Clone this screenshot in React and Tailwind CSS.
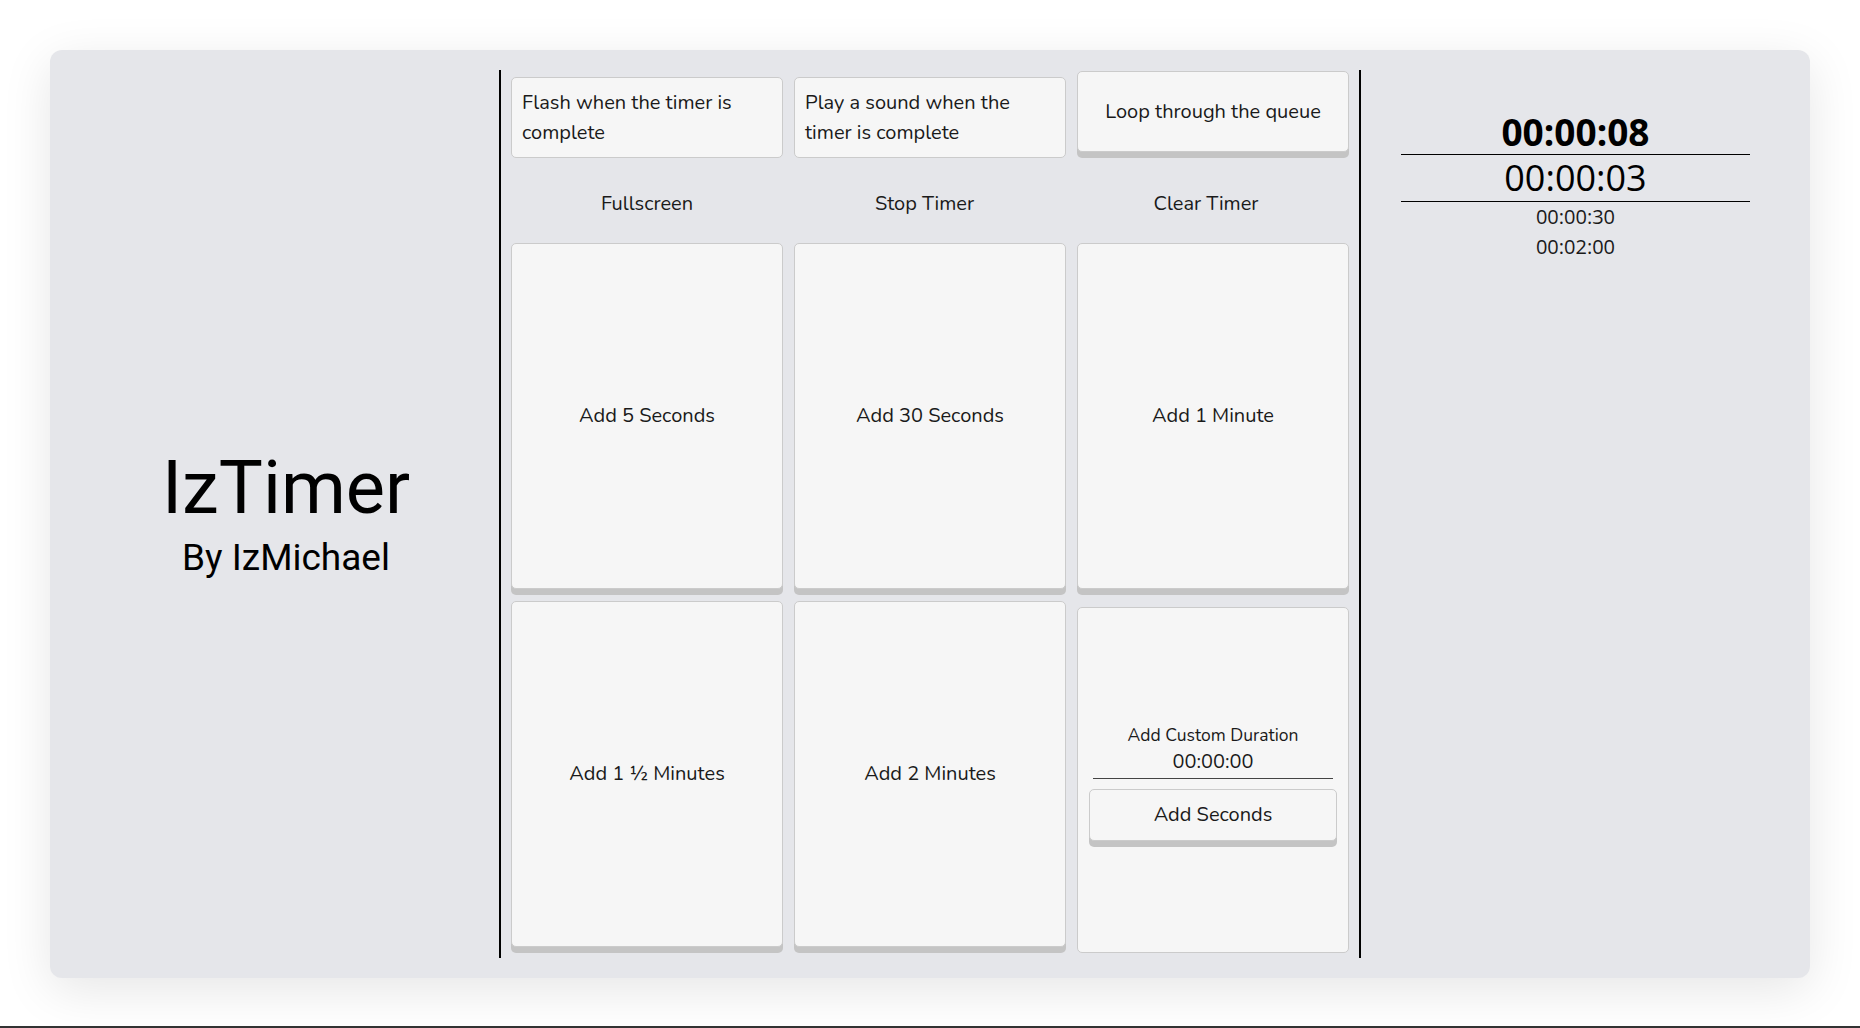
import { useState } from 'react';

const BODY_FONT = { fontFamily: '"Nunito", "Lato", "Open Sans", sans-serif' };
const TIMER_FONT = { fontFamily: '"Segoe UI", "Open Sans", "Noto Sans", sans-serif' };

const BIG_BUTTONS = ['Add 5 Seconds', 'Add 30 Seconds', 'Add 1 Minute', 'Add 1 ½ Minutes', 'Add 2 Minutes'];

const raised = 'rounded-[5px] border border-[#cbcbcb] bg-[#f6f6f6] shadow-[0_6px_0_#c4c4c4] text-[#1a1a1a]';
const pressed = 'rounded-[5px] border border-[#cbcbcb] bg-[#f6f6f6] text-[#1a1a1a]';

export default function App() {
  const [flash, setFlash] = useState(true);
  const [sound, setSound] = useState(true);
  const [loop, setLoop] = useState(false);
  const [custom, setCustom] = useState('00:00:00');

  return (
    <div className="w-full h-[1028px] bg-white flex flex-col overflow-hidden" style={BODY_FONT}>
      <div className="flex-1 pt-[50px] px-[50px]">
        <div className="w-[1760px] h-[928px] rounded-xl bg-[#e5e6ea] shadow-[0_12px_50px_rgba(0,0,0,0.10)] flex">
          {/* Title */}
          <div className="w-[449px] shrink-0 flex flex-col items-center justify-center pl-[23px] pb-[2px]">
            <h1 className="text-[74px] leading-none text-black" style={{ fontFamily: 'Roboto, sans-serif' }}>IzTimer</h1>
            <div className="text-[37px] leading-none mt-[14px] text-black" style={{ fontFamily: 'Roboto, sans-serif' }}>By IzMichael</div>
          </div>

          {/* Controls */}
          <div className="my-[20px] border-x-2 border-black pl-[10px] pr-[10px] w-[862px] shrink-0">
            <div className="grid grid-cols-3 gap-x-[11px] pt-[1px]">
              <button
                onClick={() => setFlash(!flash)}
                className={`${flash ? pressed + ' mt-[6px]' : raised} h-[81px] px-[10px] text-left text-[20px] leading-[30px]`}
              >
                Flash when the timer is complete
              </button>
              <button
                onClick={() => setSound(!sound)}
                className={`${sound ? pressed + ' mt-[6px]' : raised} h-[81px] px-[10px] text-left text-[20px] leading-[30px]`}
              >
                Play a sound when the timer is complete
              </button>
              <button
                onClick={() => setLoop(!loop)}
                className={`${loop ? pressed + ' mt-[6px]' : raised} h-[81px] px-[10px] text-[20px] leading-[30px]`}
              >
                Loop through the queue
              </button>
            </div>

            <div className="grid grid-cols-3 gap-x-[11px] h-[85px] pt-[6px] text-[20px] text-[#1a1a1a]">
              <button className="flex items-center justify-center">Fullscreen</button>
              <button className="flex items-center justify-center pr-[11px]">Stop Timer</button>
              <button className="flex items-center justify-center pr-[14px]">Clear Timer</button>
            </div>

            <div className="grid grid-cols-3 gap-x-[11px] gap-y-[12px]">
              {BIG_BUTTONS.map(label => (
                <button key={label} className={`${raised} h-[346px] text-[20px] flex items-center justify-center`}>
                  {label}
                </button>
              ))}
              <div className={`${pressed} mt-[6px] h-[346px] px-[11px] pt-[3px] flex flex-col justify-center`}>
                <div className="text-[17.5px] leading-[24px] text-center">Add Custom Duration</div>
                <input
                  value={custom}
                  onChange={e => setCustom(e.target.value)}
                  className="mx-[4px] mt-[1px] h-[31px] pb-[2px] bg-transparent text-center text-[20px] leading-[28px] border-b-[1.5px] border-[#444] outline-none"
                  style={BODY_FONT}
                />
                <button className={`${raised} mt-[10px] h-[52px] text-[20px]`}>Add Seconds</button>
              </div>
            </div>
          </div>

          {/* Queue */}
          <div className="pl-[40px] pt-[60px]" style={TIMER_FONT}>
            <div className="w-[349px] text-center text-black">
              <div className="text-[37px] font-bold leading-[44px] border-b border-black">00:00:08</div>
              <div className="text-[36px] leading-[46px] border-b border-black">00:00:03</div>
              <div className="text-[20px] leading-[30px] text-[#1a1a1a]">00:00:30</div>
              <div className="text-[20px] leading-[30px] text-[#1a1a1a]">00:02:00</div>
            </div>
          </div>
        </div>
      </div>
      <div className="h-[2px] bg-[#333]" />
    </div>
  );
}
